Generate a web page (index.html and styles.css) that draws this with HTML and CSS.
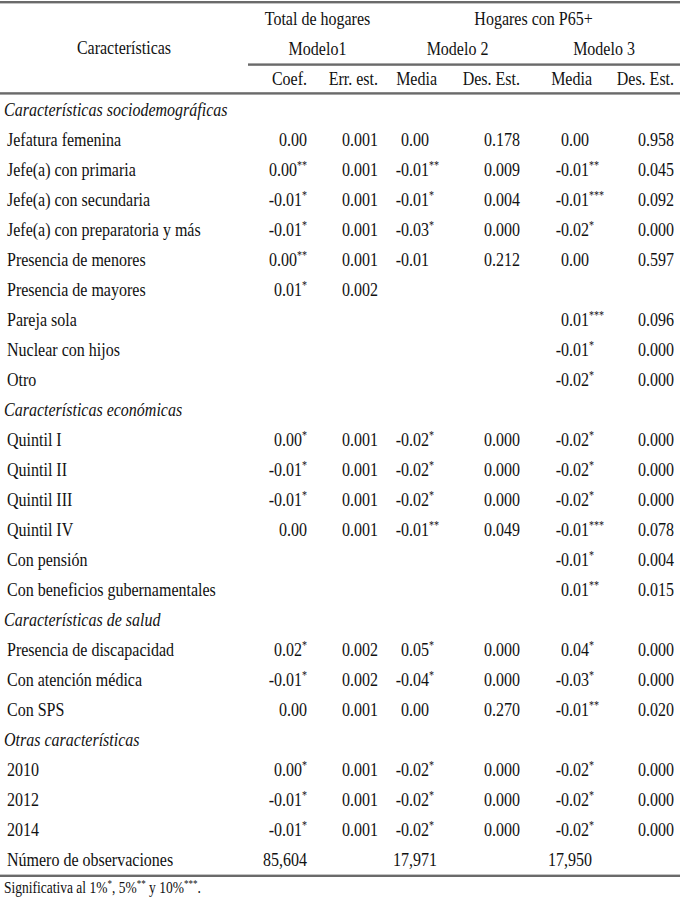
FILE: index.html
```html
<!DOCTYPE html>
<html lang="es">
<head>
<meta charset="utf-8">
<title>Resultados</title>
<link rel="stylesheet" href="styles.css">
</head>
<body>
<div class="page">
<table class="results">
  <colgroup>
    <col class="w-label"><col class="w-coef"><col class="w-err"><col class="w-m2"><col class="w-d2"><col class="w-m3"><col class="w-d3">
  </colgroup>
  <thead>
    <tr class="h1">
      <th rowspan="3" class="char">Características</th>
      <th colspan="2" class="grp">Total de hogares</th>
      <th colspan="4" class="grp">Hogares con P65+</th>
    </tr>
    <tr class="h2">
      <th colspan="2" class="model">Modelo1</th>
      <th colspan="2" class="model">Modelo 2</th>
      <th colspan="2" class="model">Modelo 3</th>
    </tr>
    <tr class="h3">
      <th class="c-coef">Coef.</th>
      <th class="c-err">Err. est.</th>
      <th class="c-m2 top">Media</th>
      <th class="c-d2">Des. Est.</th>
      <th class="c-m3 top">Media</th>
      <th class="c-d3">Des. Est.</th>
    </tr>
  </thead>
  <tbody>
    <tr class="sec"><td colspan="7">Características sociodemográficas</td></tr>
    <tr><td class="lbl">Jefatura femenina</td><td class="c-coef">0.00</td><td class="c-err">0.001</td><td class="c-m2">0.00</td><td class="c-d2">0.178</td><td class="c-m3">0.00</td><td class="c-d3">0.958</td></tr>
    <tr><td class="lbl">Jefe(a) con primaria</td><td class="c-coef">0.00<sup class="s">**</sup></td><td class="c-err">0.001</td><td class="c-m2">-0.01<sup class="s">**</sup></td><td class="c-d2">0.009</td><td class="c-m3">-0.01<sup class="s">**</sup></td><td class="c-d3">0.045</td></tr>
    <tr><td class="lbl">Jefe(a) con secundaria</td><td class="c-coef">-0.01<sup class="s">*</sup></td><td class="c-err">0.001</td><td class="c-m2">-0.01<sup class="s">*</sup></td><td class="c-d2">0.004</td><td class="c-m3">-0.01<sup class="s">***</sup></td><td class="c-d3">0.092</td></tr>
    <tr><td class="lbl">Jefe(a) con preparatoria y más</td><td class="c-coef">-0.01<sup class="s">*</sup></td><td class="c-err">0.001</td><td class="c-m2">-0.03<sup class="s">*</sup></td><td class="c-d2">0.000</td><td class="c-m3">-0.02<sup class="s">*</sup></td><td class="c-d3">0.000</td></tr>
    <tr><td class="lbl">Presencia de menores</td><td class="c-coef">0.00<sup class="s">**</sup></td><td class="c-err">0.001</td><td class="c-m2">-0.01</td><td class="c-d2">0.212</td><td class="c-m3">0.00</td><td class="c-d3">0.597</td></tr>
    <tr><td class="lbl">Presencia de mayores</td><td class="c-coef">0.01<sup class="s">*</sup></td><td class="c-err">0.002</td><td class="c-m2"></td><td class="c-d2"></td><td class="c-m3"></td><td class="c-d3"></td></tr>
    <tr><td class="lbl">Pareja sola</td><td class="c-coef"></td><td class="c-err"></td><td class="c-m2"></td><td class="c-d2"></td><td class="c-m3">0.01<sup class="s">***</sup></td><td class="c-d3">0.096</td></tr>
    <tr><td class="lbl">Nuclear con hijos</td><td class="c-coef"></td><td class="c-err"></td><td class="c-m2"></td><td class="c-d2"></td><td class="c-m3">-0.01<sup class="s">*</sup></td><td class="c-d3">0.000</td></tr>
    <tr><td class="lbl">Otro</td><td class="c-coef"></td><td class="c-err"></td><td class="c-m2"></td><td class="c-d2"></td><td class="c-m3">-0.02<sup class="s">*</sup></td><td class="c-d3">0.000</td></tr>
    <tr class="sec"><td colspan="7">Características económicas</td></tr>
    <tr><td class="lbl">Quintil I</td><td class="c-coef">0.00<sup class="s">*</sup></td><td class="c-err">0.001</td><td class="c-m2">-0.02<sup class="s">*</sup></td><td class="c-d2">0.000</td><td class="c-m3">-0.02<sup class="s">*</sup></td><td class="c-d3">0.000</td></tr>
    <tr><td class="lbl">Quintil II</td><td class="c-coef">-0.01<sup class="s">*</sup></td><td class="c-err">0.001</td><td class="c-m2">-0.02<sup class="s">*</sup></td><td class="c-d2">0.000</td><td class="c-m3">-0.02<sup class="s">*</sup></td><td class="c-d3">0.000</td></tr>
    <tr><td class="lbl">Quintil III</td><td class="c-coef">-0.01<sup class="s">*</sup></td><td class="c-err">0.001</td><td class="c-m2">-0.02<sup class="s">*</sup></td><td class="c-d2">0.000</td><td class="c-m3">-0.02<sup class="s">*</sup></td><td class="c-d3">0.000</td></tr>
    <tr><td class="lbl">Quintil IV</td><td class="c-coef">0.00</td><td class="c-err">0.001</td><td class="c-m2">-0.01<sup class="s">**</sup></td><td class="c-d2">0.049</td><td class="c-m3">-0.01<sup class="s">***</sup></td><td class="c-d3">0.078</td></tr>
    <tr><td class="lbl">Con pensión</td><td class="c-coef"></td><td class="c-err"></td><td class="c-m2"></td><td class="c-d2"></td><td class="c-m3">-0.01<sup class="s">*</sup></td><td class="c-d3">0.004</td></tr>
    <tr><td class="lbl">Con beneficios gubernamentales</td><td class="c-coef"></td><td class="c-err"></td><td class="c-m2"></td><td class="c-d2"></td><td class="c-m3">0.01<sup class="s">**</sup></td><td class="c-d3">0.015</td></tr>
    <tr class="sec"><td colspan="7">Características de salud</td></tr>
    <tr><td class="lbl">Presencia de discapacidad</td><td class="c-coef">0.02<sup class="s">*</sup></td><td class="c-err">0.002</td><td class="c-m2">0.05<sup class="s">*</sup></td><td class="c-d2">0.000</td><td class="c-m3">0.04<sup class="s">*</sup></td><td class="c-d3">0.000</td></tr>
    <tr><td class="lbl">Con atención médica</td><td class="c-coef">-0.01<sup class="s">*</sup></td><td class="c-err">0.002</td><td class="c-m2">-0.04<sup class="s">*</sup></td><td class="c-d2">0.000</td><td class="c-m3">-0.03<sup class="s">*</sup></td><td class="c-d3">0.000</td></tr>
    <tr><td class="lbl">Con SPS</td><td class="c-coef">0.00</td><td class="c-err">0.001</td><td class="c-m2">0.00</td><td class="c-d2">0.270</td><td class="c-m3">-0.01<sup class="s">**</sup></td><td class="c-d3">0.020</td></tr>
    <tr class="sec"><td colspan="7">Otras características</td></tr>
    <tr><td class="lbl">2010</td><td class="c-coef">0.00<sup class="s">*</sup></td><td class="c-err">0.001</td><td class="c-m2">-0.02<sup class="s">*</sup></td><td class="c-d2">0.000</td><td class="c-m3">-0.02<sup class="s">*</sup></td><td class="c-d3">0.000</td></tr>
    <tr><td class="lbl">2012</td><td class="c-coef">-0.01<sup class="s">*</sup></td><td class="c-err">0.001</td><td class="c-m2">-0.02<sup class="s">*</sup></td><td class="c-d2">0.000</td><td class="c-m3">-0.02<sup class="s">*</sup></td><td class="c-d3">0.000</td></tr>
    <tr><td class="lbl">2014</td><td class="c-coef">-0.01<sup class="s">*</sup></td><td class="c-err">0.001</td><td class="c-m2">-0.02<sup class="s">*</sup></td><td class="c-d2">0.000</td><td class="c-m3">-0.02<sup class="s">*</sup></td><td class="c-d3">0.000</td></tr>
    <tr class="obs"><td class="lbl">Número de observaciones</td><td class="c-coef">85,604</td><td class="c-err"></td><td class="c-m2 top">17,971</td><td class="c-d2"></td><td class="c-m3 top">17,950</td><td class="c-d3"></td></tr>
  </tbody>
</table>
<p class="note">Significativa al 1%<sup class="ns">*</sup>, 5%<sup class="ns">**</sup> y 10%<sup class="ns">***</sup>.</p>
</div>
</body>
</html>
```

FILE: styles.css
```css
html, body {
  margin: 0;
  padding: 0;
  background: #fff;
}

body {
  font-family: "Liberation Serif", "Times New Roman", serif;
  color: #111;
  width: 680px;
  min-height: 897px;
}

/* the source table is rendered slightly stretched vertically */
.page {
  width: 680px;
  transform: scaleY(1.2);
  transform-origin: 0 0;
}

.results {
  border-collapse: collapse;
  table-layout: fixed;
  width: 680px;
  margin-top: 1px;
  font-size: 16px;
  border-top: 2px solid #6a6a6a;
  border-bottom: 2px solid #6a6a6a;
}

.w-label { width: 248px; }
.w-coef { width: 66px; }
.w-err { width: 73px; }
.w-m2 { width: 57px; }
.w-d2 { width: 84px; }
.w-m3 { width: 70px; }
.w-d3 { width: 82px; }

th {
  font-weight: normal;
  padding: 0;
  height: 25px;
  line-height: 16px;
  vertical-align: middle;
  white-space: nowrap;
}

.h3 th { height: 22px; }

td {
  padding: 0;
  height: 25px;
  line-height: 16px;
  vertical-align: middle;
  white-space: nowrap;
}

.char { text-align: center; }

.grp { text-align: center; }

.model {
  text-align: center;
  border-bottom: 2px solid #6a6a6a;
}

.h3 th { border-bottom: 2px solid #6a6a6a; }
.char { border-bottom: 2px solid #6a6a6a; }

.sec td {
  font-style: italic;
  padding-left: 4px;
}

.lbl { padding-left: 7px; }

.c-coef { text-align: right; padding-right: 7px; }
.c-err { text-align: right; padding-right: 9px; }
.c-m2 { text-align: right; padding-right: 15px; }
.c-d2 { text-align: right; padding-right: 8px; }
.c-m3 { text-align: right; padding-right: 9px; }
.c-d3 { text-align: right; padding-right: 6px; }

.c-m2.top { padding-right: 7px; }
.c-m3.top { padding-right: 6px; }

.s {
  font-size: 10px;
  line-height: 0;
  vertical-align: 6px;
}

.c-m2 .s, .c-m3 .s {
  display: inline-block;
  width: 0;
}

.obs td { border-bottom: 2px solid #6a6a6a; }

.note {
  margin: 2px 0 0 4px;
  font-size: 13.5px;
  line-height: 13px;
}

.ns {
  font-size: 9px;
  line-height: 0;
  vertical-align: 5px;
}
```
